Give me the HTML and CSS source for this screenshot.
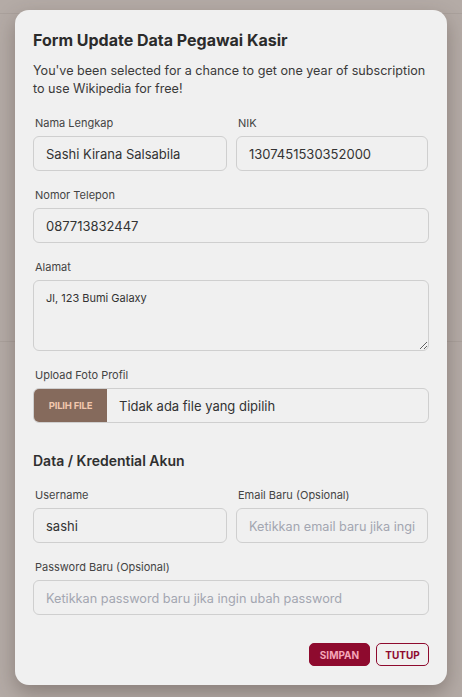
FILE: index.html
```html
<!DOCTYPE html>
<html lang="id">
<head>
<meta charset="utf-8">
<title>Form Update Data Pegawai Kasir</title>
<link rel="stylesheet" href="styles.css">
</head>
<body>
<div class="modal">
  <h1 class="title">Form Update Data Pegawai Kasir</h1>
  <p class="intro">You've been selected for a chance to get one year of subscription to use Wikipedia for free!</p>

  <div class="row two">
    <div class="field">
      <label class="label">Nama Lengkap</label>
      <input class="input" type="text" value="Sashi Kirana Salsabila">
    </div>
    <div class="field">
      <label class="label">NIK</label>
      <input class="input" type="text" value="1307451530352000">
    </div>
  </div>

  <div class="row">
    <div class="field">
      <label class="label">Nomor Telepon</label>
      <input class="input" type="text" value="087713832447">
    </div>
  </div>

  <div class="row">
    <div class="field">
      <label class="label">Alamat</label>
      <textarea class="textarea">Jl, 123 Bumi Galaxy</textarea>
    </div>
  </div>

  <div class="row">
    <div class="field">
      <label class="label">Upload Foto Profil</label>
      <div class="file">
        <span class="file-btn">PILIH FILE</span>
        <span class="file-name">Tidak ada file yang dipilih</span>
      </div>
    </div>
  </div>

  <h2 class="section">Data / Kredential Akun</h2>

  <div class="row two">
    <div class="field">
      <label class="label">Username</label>
      <input class="input" type="text" value="sashi">
    </div>
    <div class="field">
      <label class="label">Email Baru (Opsional)</label>
      <input class="input" type="text" placeholder="Ketikkan email baru jika ingin ubah email">
    </div>
  </div>

  <div class="row">
    <div class="field">
      <label class="label">Password Baru (Opsional)</label>
      <input class="input" type="password" placeholder="Ketikkan password baru jika ingin ubah password">
    </div>
  </div>

  <div class="actions">
    <button class="btn btn-primary">SIMPAN</button>
    <button class="btn btn-outline">TUTUP</button>
  </div>
</div>
</body>
</html>
```
FILE: styles.css
```css
* { box-sizing: border-box; }
html, body { margin: 0; padding: 0; }
body {
  width: 462px;
  height: 697px;
  overflow: hidden;
  background-color: #b4aba6;
  background-image:
    linear-gradient(#aaa19c, #aaa19c),
    linear-gradient(#aaa19c, #aaa19c);
  background-size: 100% 1px, 100% 1px;
  background-position: 0 13px, 0 341px;
  background-repeat: no-repeat;
  font-family: "Inter", "Open Sans", sans-serif;
  color: #333;
  padding: 10px 15px;
}
.modal {
  width: 432px;
  height: 675px;
  background: #f0f0f0;
  border-radius: 14px;
  padding: 18px 18px 19px 18px;
  box-shadow: 0 8px 20px rgba(60, 45, 40, 0.35);
  display: flex;
  flex-direction: column;
}
.title {
  margin: 0;
  font-size: 16px;
  line-height: 24px;
  font-weight: 700;
  color: #2b2b2b;
}
.intro {
  margin: 10px 0 0 0;
  font-size: 12.6px;
  line-height: 18px;
  color: #3a3a3a;
}
.row { margin-top: 16px; }
.intro + .row { margin-top: 17px; }
.row.two {
  display: grid;
  grid-template-columns: 194px 192px;
  column-gap: 9px;
}
.field { display: flex; flex-direction: column; min-width: 0; }
.label {
  font-size: 11px;
  line-height: 16px;
  color: #444;
  margin-bottom: 5px;
  padding-left: 2px;
}
.input, .textarea {
  width: 100%;
  height: 35px;
  border: 1px solid #cfcfcf;
  border-radius: 6px;
  background: #f0f0f0;
  font-family: inherit;
  font-size: 13px;
  color: #333;
  padding: 0 12px;
  outline: none;
}
.input::placeholder { color: #a3a6b1; font-size: 12.7px; }
.textarea {
  height: 71px;
  padding: 10px 12px;
  font-size: 11px;
  line-height: 14px;
  resize: vertical;
  display: block;
}
.file {
  display: flex;
  align-items: center;
  height: 35px;
  border: 1px solid #cfcfcf;
  border-radius: 6px;
  overflow: hidden;
}
.file-btn {
  background: #856a5c;
  color: #f2c8ae;
  font-size: 9.5px;
  font-weight: 700;
  width: 73px;
  height: 100%;
  display: flex;
  align-items: center;
  justify-content: center;
  letter-spacing: -0.2px;
}
.file-name {
  margin-left: 12px;
  font-size: 13px;
  color: #333;
}
.section {
  margin: 28px 0 0 0;
  font-size: 14px;
  line-height: 20px;
  font-weight: 600;
  color: #2f2f2f;
}
.section + .row { margin-top: 16px; }
.actions {
  margin-top: auto;
  display: flex;
  justify-content: flex-end;
  gap: 6px;
}
.btn {
  height: 23px;
  border-radius: 5px;
  font-family: inherit;
  font-size: 10px;
  font-weight: 700;
  padding: 0;
  cursor: pointer;
}
.btn-primary {
  width: 61px;
  background: #8e0a2e;
  border: 1px solid #8e0a2e;
  color: #f5a5b8;
}
.btn-outline {
  width: 53px;
  background: transparent;
  border: 1px solid #8e0a2e;
  color: #8e0a2e;
}
```
